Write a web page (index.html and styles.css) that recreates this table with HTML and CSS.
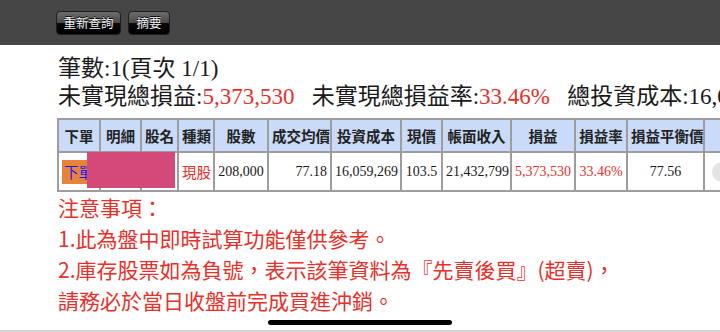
FILE: index.html
```html
<!DOCTYPE html>
<html lang="zh-Hant">
<head>
<meta charset="utf-8">
<link rel="stylesheet" href="styles.css">
</head>
<body>
<header class="topbar">
  <button class="btn btn-wide">重新查詢</button>
  <button class="btn btn-narrow">摘要</button>
</header>
<main class="content">
  <p class="summary">筆數:1(頁次 1/1)</p>
  <p class="summary">未實現總損益:<span class="red">5,373,530</span>&nbsp;&nbsp;&nbsp;未實現總損益率:<span class="red">33.46%</span>&nbsp;&nbsp;&nbsp;總投資成本:16,059,269</p>
  <div class="table-wrap">
    <table class="grid">
      <colgroup>
        <col class="c1"><col class="c2"><col class="c3"><col class="c4"><col class="c5"><col class="c6"><col class="c7"><col class="c8"><col class="c9"><col class="c10"><col class="c11"><col class="c12"><col class="c13">
      </colgroup>
      <thead>
        <tr>
          <th>下單</th><th>明細</th><th>股名</th><th>種類</th><th>股數</th><th>成交均價</th><th>投資成本</th><th>現價</th><th>帳面收入</th><th>損益</th><th>損益率</th><th>損益平衡價</th><th></th>
        </tr>
      </thead>
      <tbody>
        <tr>
          <td class="left"><span class="order">下單</span></td>
          <td></td>
          <td></td>
          <td class="center sans red">現股</td>
          <td class="center">208,000</td>
          <td class="right">77.18</td>
          <td class="center">16,059,269</td>
          <td class="center">103.5</td>
          <td class="center">21,432,799</td>
          <td class="center red">5,373,530</td>
          <td class="center red">33.46%</td>
          <td class="center">77.56</td>
          <td class="left"><span class="round-btn"></span></td>
        </tr>
      </tbody>
    </table>
    <div class="redact"></div>
  </div>
  <div class="notes">
    <p>注意事項：</p>
    <p>1.此為盤中即時試算功能僅供參考。</p>
    <p>2.庫存股票如為負號，表示該筆資料為『先賣後買』(超賣)，</p>
    <p>請務必於當日收盤前完成買進沖銷。</p>
  </div>
</main>
<div class="home-indicator"></div>
<div class="bottom-edge"></div>
</body>
</html>
```
FILE: styles.css
```css
html, body {
  margin: 0;
  padding: 0;
}
body {
  width: 720px;
  height: 332px;
  overflow: hidden;
  background: #ffffff;
  font-family: "Liberation Serif", "Noto Sans CJK TC", serif;
  color: #1a1a1a;
  position: relative;
}
.topbar {
  height: 45px;
  box-sizing: border-box;
  background: #464646;
  display: flex;
  align-items: flex-start;
  gap: 7px;
  padding: 11px 0 0 56px;
}
.btn {
  height: 24px;
  box-sizing: border-box;
  border: 1px solid #1e1e1e;
  border-radius: 4px;
  background: linear-gradient(to bottom, #6c6c6c 0%, #4a4a4a 48%, #0a0a0a 52%, #000000 100%);
  color: #f2f2f2;
  font-family: "Noto Sans CJK TC", sans-serif;
  font-size: 12.5px;
  line-height: 22px;
  padding: 0;
  text-align: center;
  text-shadow: 0 -1px 0 #000;
}
.btn-wide { width: 65px; }
.btn-narrow { width: 42px; }
.content {
  padding: 10px 0 0 58px;
}
.summary {
  margin: 0;
  font-size: 23px;
  line-height: 28px;
  white-space: nowrap;
}
.red { color: #e8302a; }
.table-wrap {
  position: relative;
  margin: 7px 0 0 -1px;
  width: 720px;
}
.grid {
  border-collapse: collapse;
  table-layout: fixed;
  width: 706px;
}
.c1 { width: 42px; }
.c2 { width: 41px; }
.c3 { width: 37px; }
.c4 { width: 36px; }
.c5 { width: 54px; }
.c6 { width: 63px; }
.c7 { width: 70px; }
.c8 { width: 41px; }
.c9 { width: 69px; }
.c10 { width: 64px; }
.c11 { width: 52px; }
.c12 { width: 77px; }
.c13 { width: 60px; }
.grid th, .grid td {
  border: 2px solid #9d9d9d;
  padding: 0 3px;
  white-space: nowrap;
  overflow: hidden;
}
.grid th {
  height: 31px;
  background: #c9dbf8;
  font-family: "Noto Sans CJK TC", sans-serif;
  font-weight: 700;
  font-size: 14.5px;
  color: #222;
  text-align: center;
}
.grid td {
  height: 37px;
  font-size: 14px;
  color: #1a1a1a;
}
.grid td.red { color: #e8302a; }
.center { text-align: center; }
.right { text-align: right; }
.left { text-align: left; }
.sans {
  font-family: "Noto Sans CJK TC", sans-serif;
  font-size: 14.5px !important;
}
.order {
  display: inline-block;
  background: #e8833a;
  color: #1a1aff;
  font-family: "Noto Sans CJK TC", sans-serif;
  font-size: 14.5px;
  line-height: 24px;
  padding: 0 4px 0 2px;
}
.round-btn {
  display: inline-block;
  width: 22px;
  height: 20px;
  border-radius: 10px;
  background: #e4e4e4;
  vertical-align: middle;
  margin-left: 4px;
}
.redact {
  position: absolute;
  left: 30px;
  top: 34px;
  width: 88px;
  height: 36px;
  background: #d4497a;
}
.notes {
  color: #e8302a;
  font-family: "Noto Sans CJK TC", sans-serif;
  font-size: 21px;
  line-height: 31px;
}
.notes p {
  margin: 0;
  white-space: nowrap;
}
.home-indicator {
  position: absolute;
  left: 268px;
  top: 320px;
  width: 184px;
  height: 5px;
  border-radius: 3px;
  background: #000;
}
.bottom-edge {
  position: absolute;
  left: 0;
  bottom: 0;
  width: 720px;
  height: 2px;
  background: #cfcfcf;
}
```
